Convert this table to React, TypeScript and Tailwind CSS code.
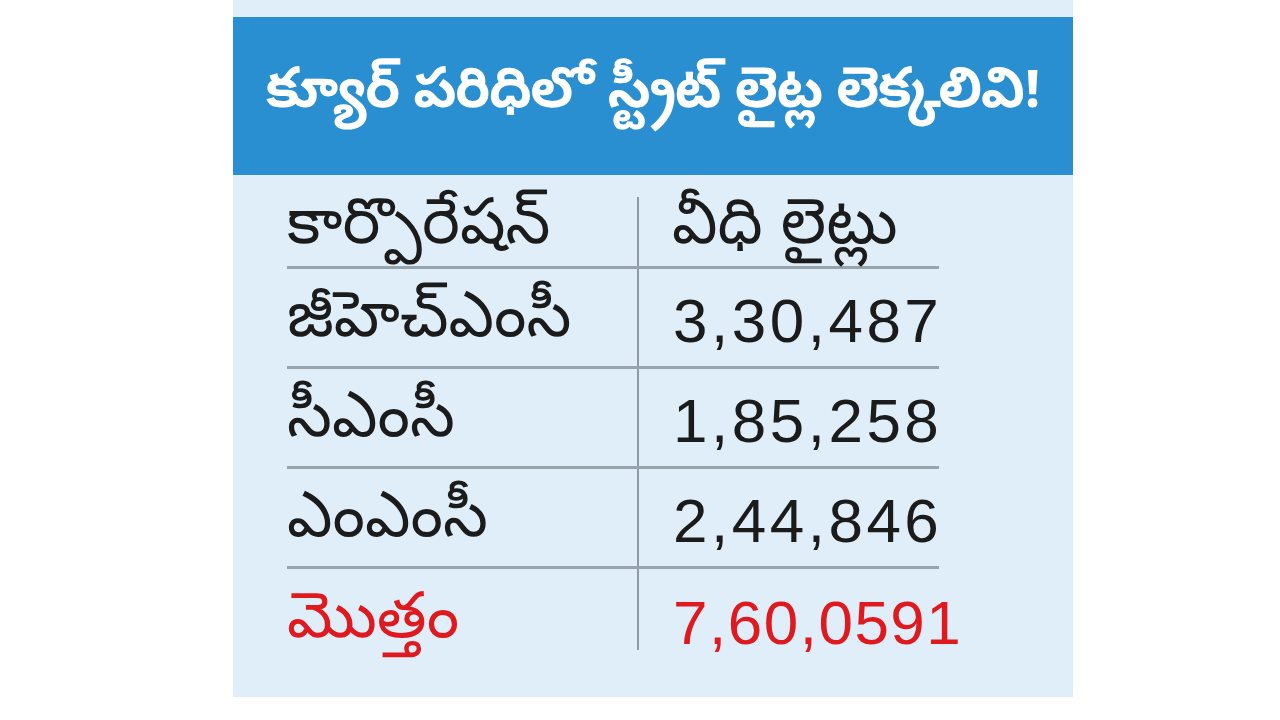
const rows = [
  { name: "జీహెచ్ఎంసీ", value: "3,30,487" },
  { name: "సీఎంసీ", value: "1,85,258" },
  { name: "ఎంఎంసీ", value: "2,44,846" },
];

const font = { fontFamily: '"Noto Sans Telugu", "Noto Sans", "Liberation Sans", sans-serif' };
const nums = { fontFamily: '"Liberation Sans", sans-serif' };

export default function App() {
  return (
    <div className="w-full h-[720px] bg-white pl-[233px]" style={font}>
      <div className="w-[840px] h-[697px] bg-[#dfeef8] pt-[17px]">
        {/* title band */}
        <div className="h-[158px] bg-[#2a8fd0] flex items-center justify-center">
          <h1 className="text-white font-bold text-[56px] leading-none tracking-tight">
            క్యూర్ పరిధిలో స్ట్రీట్ లైట్ల లెక్కలివి!
          </h1>
        </div>

        {/* table */}
        <div className="ml-[54px] mt-[22px] w-[652px] text-[#1b1b1b]">
          <div className="flex h-[72px] border-b-[3px] border-[#98a4ac]">
            <div className="w-[352px] shrink-0 border-r-2 border-[#8f9ba3] flex items-start text-[64px] leading-none pt-[2px] whitespace-nowrap">
              కార్పొరేషన్
            </div>
            <div className="flex-1 pl-[33px] flex items-start text-[64px] leading-none pt-[2px] whitespace-nowrap">
              వీధి లైట్లు
            </div>
          </div>
          {rows.map((r) => (
            <div key={r.value} className="flex h-[100px] border-b-[3px] border-[#98a4ac]">
              <div className="w-[352px] shrink-0 border-r-2 border-[#8f9ba3] flex items-center pt-[12px] text-[64px] leading-none whitespace-nowrap">
                {r.name}
              </div>
              <div className="flex-1 pl-[34px] flex items-center pt-[6px] text-[62px] leading-none tracking-[3.5px] whitespace-nowrap" style={nums}>
                {r.value}
              </div>
            </div>
          ))}
          <div className="flex h-[81px] text-[#e0191f]">
            <div className="w-[352px] shrink-0 border-r-2 border-[#8f9ba3] flex items-start pt-[24px] text-[64px] leading-none whitespace-nowrap">
              మొత్తం
            </div>
            <div className="flex-1 pl-[34px] flex items-start pt-[23px] text-[62px] leading-none tracking-[1.5px] whitespace-nowrap" style={nums}>
              7,60,0591
            </div>
          </div>
        </div>
      </div>
    </div>
  );
}
